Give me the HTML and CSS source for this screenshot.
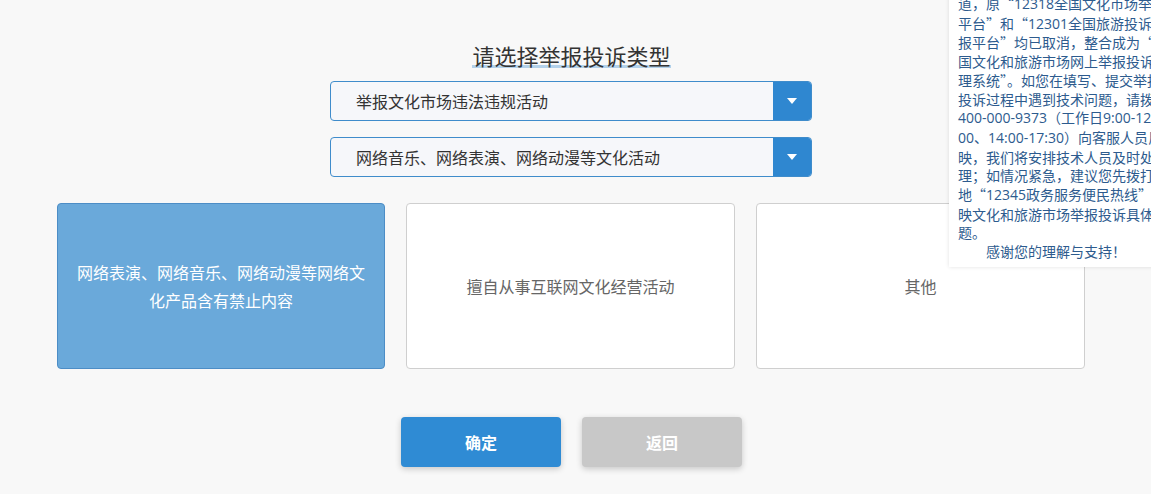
FILE: index.html
```html
<!DOCTYPE html>
<html lang="zh">
<head>
<meta charset="utf-8">
<title>请选择举报投诉类型</title>
<link rel="stylesheet" href="styles.css">
</head>
<body>
<main class="page">
  <div class="title-row"><h1 class="title">请选择举报投诉类型</h1></div>
  <div class="selects">
    <div class="select">
      <span class="select-text">举报文化市场违法违规活动</span>
      <span class="select-btn"><svg width="10" height="6" viewBox="0 0 10 6"><polygon points="0,0 10,0 5,6" fill="#fff"/></svg></span>
    </div>
    <div class="select">
      <span class="select-text">网络音乐、网络表演、网络动漫等文化活动</span>
      <span class="select-btn"><svg width="10" height="6" viewBox="0 0 10 6"><polygon points="0,0 10,0 5,6" fill="#fff"/></svg></span>
    </div>
  </div>
  <div class="cards">
    <div class="card card-active">网络表演、网络音乐、网络动漫等网络文化产品含有禁止内容</div>
    <div class="card">擅自从事互联网文化经营活动</div>
    <div class="card">其他</div>
  </div>
  <div class="actions">
    <button class="btn btn-primary">确定</button>
    <button class="btn btn-gray">返回</button>
  </div>
</main>
<aside class="notice">
  <p class="notice-text">道，原“<span class="num">12318</span>全国文化市场举报<br>平台”和“<span class="num">12301</span>全国旅游投诉举<br>报平台”均已取消，整合成为“全<br>国文化和旅游市场网上举报投诉处<br>理系统”。如您在填写、提交举报<br>投诉过程中遇到技术问题，请拨打<br><span class="num">400-000-9373</span>（工作日<span class="num">9:00-12:</span><br><span class="num">00</span>、<span class="num">14:00-17:30</span>）向客服人员反<br>映，我们将安排技术人员及时处<br>理；如情况紧急，建议您先拨打当<br>地“<span class="num">12345</span>政务服务便民热线”反<br>映文化和旅游市场举报投诉具体问<br>题。</p>
  <p class="notice-thanks">感谢您的理解与支持！</p>
</aside>
</body>
</html>
```
FILE: styles.css
```css
html, body {
  margin: 0;
  padding: 0;
}
body {
  background: #f8f8f8;
  font-family: "Noto Sans CJK SC", "Noto Sans", sans-serif;
  color: #333;
  width: 1151px;
  height: 494px;
  overflow: hidden;
  position: relative;
}
.page {
  width: 1028px;
  margin-left: 57px;
  padding-top: 45px;
}
.title-row {
  display: flex;
  justify-content: center;
  margin-left: 1px;
}
.title {
  margin: 0;
  font-size: 22px;
  font-weight: normal;
  line-height: 20px;
  color: #333;
  border-bottom: 3px solid #b3d1ea;
}
.selects {
  display: flex;
  flex-direction: column;
  align-items: center;
  gap: 16px;
  margin-top: 13px;
}
.select {
  width: 482px;
  height: 40px;
  box-sizing: border-box;
  border: 1px solid #3f8ccb;
  border-radius: 4px;
  background: #f6f7fa;
  display: flex;
  align-items: center;
  overflow: hidden;
}
.select-text {
  flex: 1;
  padding-left: 25px;
  font-size: 16px;
  color: #333;
}
.select-btn {
  width: 38px;
  height: 100%;
  background: #2f87d0;
  display: flex;
  align-items: center;
  justify-content: center;
}
.cards {
  display: grid;
  grid-template-columns: 328px 329px 329px;
  gap: 21px;
  margin-top: 26px;
}
.card {
  height: 166px;
  box-sizing: border-box;
  border: 1px solid #cfcfcf;
  border-radius: 4px;
  background: #fff;
  color: #666;
  font-size: 16px;
  line-height: 28px;
  display: flex;
  align-items: center;
  justify-content: center;
  text-align: center;
  padding: 0 16px;
}
.card-active {
  background: #6aa9da;
  border-color: #4c8dc6;
  color: #fff;
}
.actions {
  display: flex;
  justify-content: center;
  gap: 21px;
  margin-top: 48px;
  margin-left: 1px;
}
.btn {
  width: 160px;
  height: 50px;
  border: none;
  border-radius: 4px;
  font-family: "Noto Sans CJK SC", sans-serif;
  font-size: 16px;
  font-weight: bold;
  color: #fff;
  box-shadow: 0 2px 6px rgba(0, 0, 0, 0.2);
}
.btn-primary {
  background: #2f8bd4;
}
.btn-gray {
  background: #c8c8c8;
}
.notice {
  position: absolute;
  top: -12px;
  left: 949px;
  width: 240px;
  padding: 6px 0 6px 9px;
  background: #fff;
  box-shadow: 0 0 4px rgba(0, 0, 0, 0.12);
  color: #2d5b8e;
  font-family: "Noto Sans CJK SC", sans-serif;
  font-size: 14px;
  line-height: 18.7px;
}
.notice-text,
.notice-thanks {
  margin: 0;
  white-space: nowrap;
}
.num {
  font-family: "Open Sans", "Noto Sans", sans-serif;
}
.notice-thanks {
  text-indent: 28px;
}
```
